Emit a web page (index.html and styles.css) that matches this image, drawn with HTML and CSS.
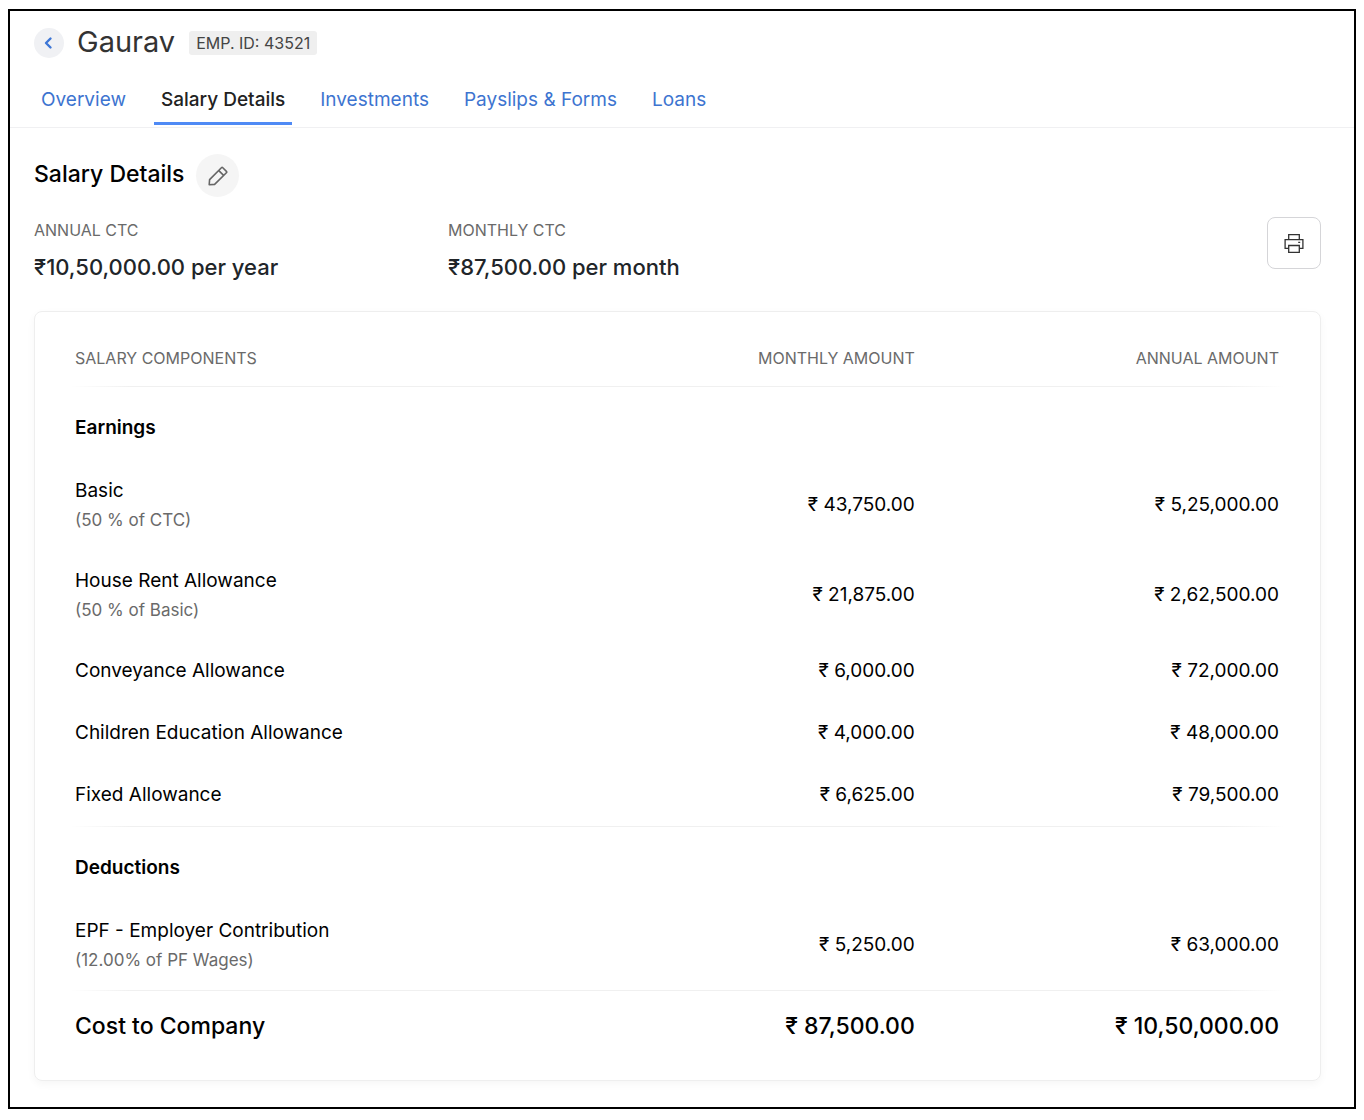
FILE: index.html
```html
<!DOCTYPE html>
<html lang="en">
<head>
<meta charset="utf-8">
<meta name="viewport" content="width=device-width, initial-scale=1">
<title>Gaurav - Salary Details</title>
<link rel="stylesheet" href="styles.css">
</head>
<body>
<div class="frame">
  <header class="employee">
    <button class="back" type="button" aria-label="Back">
      <svg width="12" height="14" viewBox="0 0 12 14" fill="none" stroke="currentColor" stroke-width="2.4" stroke-linecap="round" stroke-linejoin="round"><path d="M7.5 2.5 3 7l4.500 4.500"/></svg>
    </button>
    <h1 class="name">Gaurav</h1>
    <span class="badge">EMP. ID: 43521</span>
  </header>
  <nav class="tabs">
    <a class="tab" href="#overview">Overview</a>
    <a class="tab active" href="#salary" aria-current="page">Salary Details</a>
    <a class="tab" href="#investments">Investments</a>
    <a class="tab" href="#payslips">Payslips &amp; Forms</a>
    <a class="tab" href="#loans">Loans</a>
  </nav>
  <main class="content">
    <div class="section-head">
      <h2 class="section-title">Salary Details</h2>
      <button class="edit" type="button" aria-label="Edit">
        <svg width="20" height="20" viewBox="0 0 20 20" fill="none" stroke="currentColor" stroke-width="1.6" stroke-linejoin="round"><path d="M1.2 18.8 1.6 13.6 13.4 1.8a1 1 0 0 1 1.4 0l3.6 3.6a1 1 0 0 1 0 1.4L6.6 18.4zM10.8 4.6l4.8 4.8"/></svg>
      </button>
    </div>
    <div class="summary">
      <dl class="figure">
        <dt>ANNUAL CTC</dt>
        <dd>₹10,50,000.00 per year</dd>
      </dl>
      <dl class="figure">
        <dt>MONTHLY CTC</dt>
        <dd>₹87,500.00 per month</dd>
      </dl>
      <button class="print" type="button" aria-label="Print">
        <svg width="20" height="20" viewBox="0 0 20 20" fill="none" stroke="currentColor" stroke-width="1.3"><path d="M4.7 6.700V1.600h10.6v5.100M4.7 15.300H1.1V6.700h17.8v8.600h-3.6M4.7 12.500h10.6v6.900H4.7zM14.2 9.300h2"/></svg>
      </button>
    </div>
    <section class="card">
      <table class="components">
        <thead>
          <tr class="ruled">
            <th scope="col">SALARY COMPONENTS</th>
            <th scope="col">MONTHLY AMOUNT</th>
            <th scope="col">ANNUAL AMOUNT</th>
          </tr>
        </thead>
        <tbody>
          <tr class="group"><th scope="rowgroup" colspan="3">Earnings</th></tr>
          <tr class="tall"><td>Basic<span class="basis">(50 % of CTC)</span></td><td>₹ 43,750.00</td><td>₹ 5,25,000.00</td></tr>
          <tr class="tall"><td>House Rent Allowance<span class="basis">(50 % of Basic)</span></td><td>₹ 21,875.00</td><td>₹ 2,62,500.00</td></tr>
          <tr><td>Conveyance Allowance</td><td>₹ 6,000.00</td><td>₹ 72,000.00</td></tr>
          <tr><td>Children Education Allowance</td><td>₹ 4,000.00</td><td>₹ 48,000.00</td></tr>
          <tr class="ruled"><td>Fixed Allowance</td><td>₹ 6,625.00</td><td>₹ 79,500.00</td></tr>
        </tbody>
        <tbody>
          <tr class="group"><th scope="rowgroup" colspan="3">Deductions</th></tr>
          <tr class="tall ruled"><td>EPF - Employer Contribution<span class="basis">(12.00% of PF Wages)</span></td><td>₹ 5,250.00</td><td>₹ 63,000.00</td></tr>
        </tbody>
        <tfoot>
          <tr><td>Cost to Company</td><td>₹ 87,500.00</td><td>₹ 10,50,000.00</td></tr>
        </tfoot>
      </table>
    </section>
  </main>
</div>
</body>
</html>
```
FILE: styles.css
```css
* {
  box-sizing: border-box;
}

body {
  margin: 0;
  padding: 9px 8px 11px;
  background: #fff;
  color: #000;
  font: 400 19px/28px Inter, "Liberation Sans", sans-serif;
}

h1, h2, dl, dd {
  margin: 0;
}

button {
  display: grid;
  place-items: center;
  padding: 0;
  border: 0;
  cursor: pointer;
}

.frame {
  border: 2px solid #000;
}

.employee {
  display: flex;
  align-items: center;
  padding: 12px 24px 0;
}

.back {
  width: 30px;
  height: 30px;
  border-radius: 50%;
  background: #f0f1f4;
  color: #3d76d6;
}

.name {
  margin-left: 13px;
  padding-bottom: 2px;
  color: #333;
  font-size: 29px;
  font-weight: 400;
  line-height: 38px;
}

.badge {
  margin-left: 14px;
  padding: 0 7px;
  border-radius: 3px;
  background: #efefef;
  color: #444;
  font-size: 16px;
  line-height: 24px;
}

.tabs {
  display: flex;
  gap: 21px;
  padding: 11px 24px 2px;
  border-bottom: 1px solid #f0f0f2;
}

.tab {
  padding: 12px 7px 8px;
  border-bottom: 3px solid transparent;
  color: #3d74d0;
  text-decoration: none;
}

.tab.active {
  border-color: #4f8af5;
  color: #222;
  font-weight: 500;
}

.content {
  padding: 26px 33px 26px 24px;
}

.section-head {
  display: flex;
  align-items: center;
  gap: 12px;
}

.section-title {
  padding-bottom: 4px;
  font-size: 23px;
  font-weight: 500;
}

.edit {
  width: 43px;
  height: 43px;
  border-radius: 50%;
  background: #f5f5f5;
  color: #666;
}

.summary {
  display: grid;
  grid-template-columns: 414px 1fr auto;
  align-items: center;
  margin-top: 19px;
}

.figure dt {
  color: #6a6a6a;
  font-size: 16px;
}

.figure dd {
  padding: 9px 0 10px;
  color: #212529;
  font-size: 22px;
  font-weight: 500;
}

.print {
  align-self: start;
  width: 54px;
  height: 52px;
  margin-top: 1px;
  border: 1px solid #d5d5d8;
  border-radius: 8px;
  background: #fff;
  color: #333;
}

.card {
  margin-top: 20px;
  padding: 18px 36px 20px 35px;
  border: 1px solid #eee;
  border-radius: 8px;
  box-shadow: 0 3px 8px rgba(0, 0, 0, 0.04);
}

.components {
  width: 100%;
  border-collapse: collapse;
  table-layout: fixed;
}

.components th,
.components td {
  height: 62px;
  padding: 0 5px 2px;
  text-align: right;
  vertical-align: middle;
}

.components th:first-child,
.components td:first-child {
  width: 40%;
  text-align: left;
}

.components thead th {
  height: 57px;
  padding-bottom: 1px;
  color: #6a6a6a;
  font-size: 16px;
  font-weight: 400;
}

.components .group th {
  height: 74px;
  padding-top: 8px;
  padding-bottom: 0;
  font-weight: 600;
}

.components .tall td {
  height: 90px;
}

.components .tall td:first-child {
  padding-bottom: 0;
}

.components .ruled {
  background: linear-gradient(90deg, transparent, #f0f0f0 5%, #f0f0f0 95%, transparent) bottom / 100% 1px no-repeat;
}

.basis {
  display: block;
  color: #6a6a6a;
  font-size: 17px;
  line-height: 30px;
}

.components tfoot td {
  height: 69px;
  padding-bottom: 0;
  font-size: 23px;
  font-weight: 500;
}
```
